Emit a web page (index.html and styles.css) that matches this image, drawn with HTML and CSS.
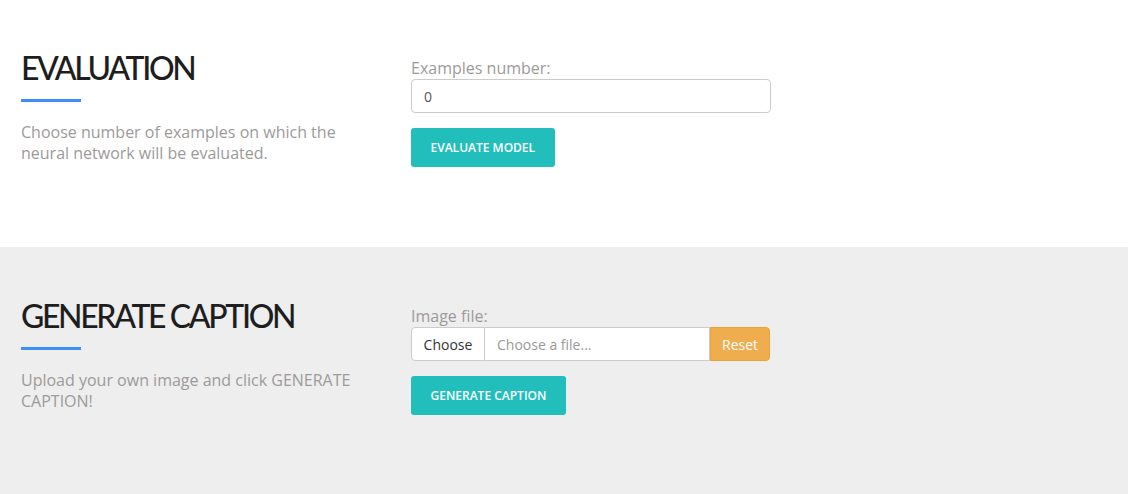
FILE: index.html
```html
<!DOCTYPE html>
<html lang="en">
<head>
<meta charset="utf-8">
<title>Model</title>
<link rel="stylesheet" href="styles.css">
</head>
<body>
<section class="section section-white">
  <div class="row">
    <div class="intro">
      <h2 class="title">EVALUATION</h2>
      <div class="underline"></div>
      <p class="desc">Choose number of examples on which the neural network will be evaluated.</p>
    </div>
    <div class="form">
      <label class="label">Examples number:</label>
      <input class="input" type="text" value="0">
      <button class="btn">EVALUATE MODEL</button>
    </div>
  </div>
</section>
<section class="section section-gray">
  <div class="row">
    <div class="intro">
      <h2 class="title">GENERATE CAPTION</h2>
      <div class="underline"></div>
      <p class="desc">Upload your own image and click GENERATE CAPTION!</p>
    </div>
    <div class="form">
      <label class="label">Image file:</label>
      <div class="file-group">
        <span class="file-choose">Choose</span>
        <span class="file-name">Choose a file...</span>
        <span class="file-reset">Reset</span>
      </div>
      <button class="btn">GENERATE CAPTION</button>
    </div>
  </div>
</section>
</body>
</html>
```
FILE: styles.css
```css
* { box-sizing: border-box; }
html, body { margin: 0; padding: 0; }
body {
  font-family: "Open Sans", "Liberation Sans", sans-serif;
  background: #fff;
  color: #333;
}
.section {
  height: 247px;
  padding: 50px 21px 0;
}
.section-white { background: #fff; }
.section-gray { background: #eeeeee; padding-top: 51px; }
.row {
  display: grid;
  grid-template-columns: 360px 360px;
  column-gap: 30px;
  align-items: start;
}
.title {
  margin: 0;
  font-family: "Lato", "Liberation Sans", sans-serif;
  font-weight: 500;
  font-size: 32px;
  line-height: 35px;
  color: #1e1e1e;
  letter-spacing: -2.35px;
  white-space: nowrap;
}
.underline {
  width: 60px;
  height: 3px;
  background: #3d8ff3;
  margin-top: 14px;
}
.desc {
  margin: 20px 0 0;
  font-size: 16px;
  line-height: 21px;
  color: #9c9a9a;
}
.form {
  padding-top: 8px;
  display: flex;
  flex-direction: column;
  align-items: flex-start;
}
.label {
  font-size: 16px;
  line-height: 21px;
  color: #9c9a9a;
}
.input {
  width: 360px;
  height: 34px;
  border: 1px solid #ccc;
  border-radius: 4px;
  padding: 0 12px;
  font-family: inherit;
  font-size: 14px;
  color: #555;
  background: #fff;
  outline: none;
}
.btn {
  margin-top: 15px;
  border: 0;
  border-radius: 3px;
  background: #22bebb;
  color: #fff;
  font-family: "Open Sans", sans-serif;
  font-weight: 600;
  font-size: 12px;
  line-height: 15px;
  padding: 12px 19.5px;
  cursor: pointer;
}
.file-group {
  display: flex;
  width: 359px;
  height: 34px;
  font-size: 14px;
}
.file-choose {
  width: 74px;
  display: flex;
  align-items: center;
  justify-content: center;
  background: #fff;
  border: 1px solid #ccc;
  border-radius: 4px 0 0 4px;
  color: #333;
}
.file-name {
  flex: 1;
  display: flex;
  align-items: center;
  padding-left: 12px;
  background: #fff;
  border: 1px solid #ccc;
  border-left: 0;
  color: #999;
}
.file-reset {
  width: 60px;
  display: flex;
  align-items: center;
  justify-content: center;
  background: #f0ad4e;
  border: 1px solid #eea236;
  border-radius: 0 4px 4px 0;
  color: #fff;
}
```
